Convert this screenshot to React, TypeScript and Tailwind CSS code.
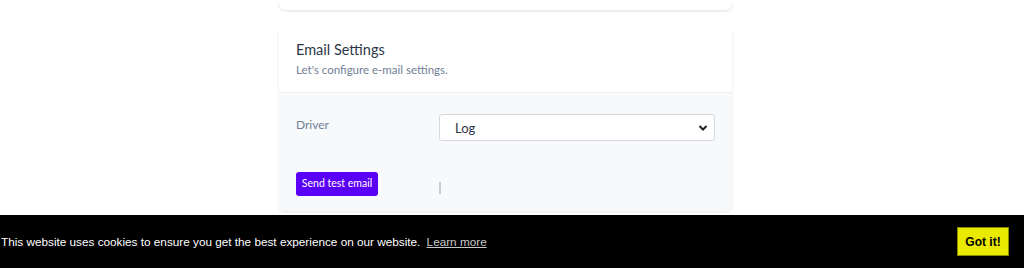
export default function App() {
  return (
    <div className="min-h-[268px] bg-white font-['Lato',sans-serif]">
      <div className="ml-[279px] w-[453px] flex flex-col gap-[17px]">
        <div className="h-[10px] rounded-b-md bg-white shadow-[0_1px_3px_rgba(0,0,0,0.12)]" />

        <div className="rounded-md bg-white shadow-[0_1px_3px_rgba(0,0,0,0.1)] overflow-hidden">
          <div className="px-[17px] pt-[12px] pb-[14px] border-b border-[#edeff3]">
            <h2 className="text-[14.5px] leading-[22px] text-[#2d3748]">Email Settings</h2>
            <p className="mt-[1px] text-[11.5px] leading-[16px] text-[#718096]">Let's configure e-mail settings.</p>
          </div>

          <div className="bg-[#f8f9fb] pl-[17px] pr-[17px] pt-[21px] pb-[15px]">
            <div className="grid grid-cols-[143px_1fr] items-start">
              <label className="pt-[4px] text-[12px] leading-[14px] text-[#718096]">Driver</label>
              <div className="relative h-[27px] rounded-[3px] border border-[#d5d8de] bg-white">
                <span className="absolute left-[15px] top-[5px] text-[13px] leading-[16px] text-[#2d3748]">Log</span>
                <svg className="absolute right-[6px] top-[9px]" width="10" height="8" viewBox="0 0 10 8">
                  <path d="M1.5 2l3.5 3.5L8.5 2" fill="none" stroke="#222" strokeWidth="2" />
                </svg>
              </div>
            </div>

            <div className="mt-[31px] grid grid-cols-[143px_1fr] items-start">
              <button className="w-[82px] h-[24px] rounded-[3px] bg-[#5b00f7] text-[10.5px] text-white">
                Send test email
              </button>
              <div className="mt-[10px] w-[2px] h-[12px] bg-[#c9ccd3]" />
            </div>
          </div>
        </div>
      </div>

      <div className="fixed bottom-0 left-0 right-0 h-[53px] bg-black flex items-center justify-between pl-[1px] pr-[15px] font-['Liberation_Sans',Arial,sans-serif]">
        <p className="text-[11.75px] text-white">
          This website uses cookies to ensure you get the best experience on our website.{" "}
          <a className="ml-[3px] underline text-[#c8c8c8]">Learn more</a>
        </p>
        <button className="w-[52px] h-[29px] border border-[#8a8a00] bg-[#eaea00] text-[12px] font-bold text-black">
          Got it!
        </button>
      </div>
    </div>
  )
}
